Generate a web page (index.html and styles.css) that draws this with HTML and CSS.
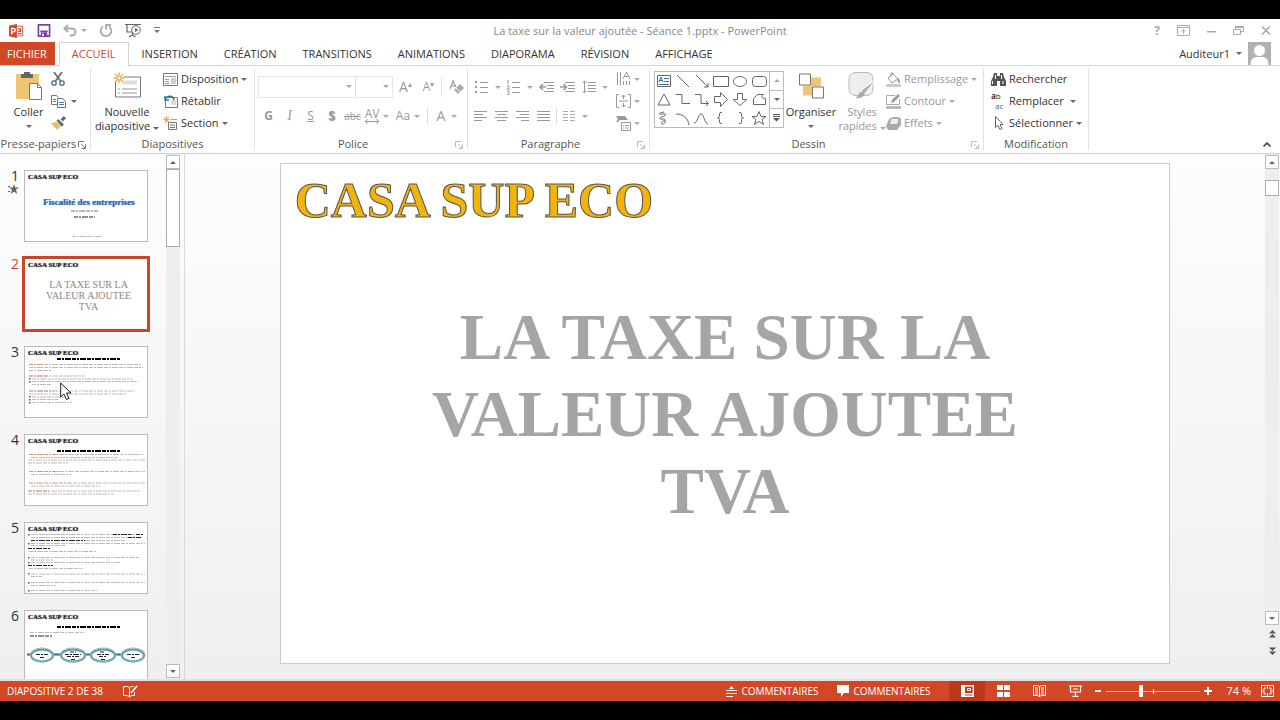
FILE: index.html
```html
<!DOCTYPE html>
<html lang="fr">
<head>
    <meta charset="UTF-8">
    <meta name="viewport" content="width=device-width, initial-scale=1.0">
    <title>La taxe sur la valeur ajoutée - Séance 1.pptx - PowerPoint</title>
    <link rel="stylesheet" href="styles.css">
</head>
<body>

    <header class="titlebar">
        <div class="quick">
            <button aria-label="PowerPoint"><svg width="17" height="14" viewBox="0 0 17 16"><path fill="#d24726" d="M0 2l9-2v16l-9-2z"/><path fill="#fff" stroke="#d24726" d="M9 2.500h6.500v11H9"/><path fill="none" stroke="#d24726" stroke-width="1.500" d="M10 5.500h3v3h-3M10 11h4"/><path fill="none" stroke="#fff" stroke-width="1.600" d="M3 12V5h2a2 2 0 0 1 0 4H3"/></svg></button>
            <button aria-label="Enregistrer"><svg width="14" height="13" viewBox="0 0 14 14"><path fill="#fff" stroke="#7a3fa0" stroke-width="1.800" d="M1 1h12v12H1z"/><path fill="#7a3fa0" d="M3 7h8v1.500H3zM3.500 9h7v4h-7z"/><path fill="#fff" d="M5 10.500h2V13H5z"/></svg></button>
            <button class="off with-caret" aria-label="Annuler"><svg width="14" height="13" viewBox="0 0 14 13"><path fill="none" stroke="#aaa" stroke-width="2" d="M5 1L1.500 4.500 5 8M2 4.500h7a3.500 3.500 0 0 1 0 7H7"/></svg><i class="caret"></i></button>
            <button class="off" aria-label="Répéter"><svg width="14" height="14" viewBox="0 0 14 14"><path fill="none" stroke="#aaa" stroke-width="1.800" d="M4 2.500a5.300 5.300 0 1 0 6 0M7 5.500V1h5"/></svg></button>
            <button aria-label="Diaporama"><svg width="17" height="15" viewBox="0 0 17 15"><path fill="none" stroke="#666" stroke-width="1.200" d="M0 1.500h16M2 1.500V9h5M7.500 10v2M4 14l3.500-2 3 2"/><circle cx="11" cy="7" r="4.300" fill="#fff" stroke="#666"/><path fill="#3b8f63" d="M10 4.800l3.500 2.200-3.500 2.200z"/></svg></button>
            <button aria-label="Personnaliser"><svg width="6" height="7" viewBox="0 0 6 7"><path fill="#777" d="M0 0h6v1H0zM0 3h6L3 6z"/></svg></button>
        </div>
        <h1>La taxe sur la valeur ajoutée - Séance 1.pptx - PowerPoint</h1>
        <div class="window-btns">
            <button class="help" aria-label="Aide">?</button>
            <button aria-label="Options du ruban"><svg width="13" height="11" viewBox="0 0 13 11"><path fill="none" stroke="#aaa" d="M.5.5h12v10H.5zM.5 2.500h12M6.500 9V5M4.500 6.500l2-2 2 2"/></svg></button>
            <button aria-label="Réduire"><svg width="9" height="11" viewBox="0 0 9 11"><path fill="#aaa" d="M0 6h9v1.500H0z"/></svg></button>
            <button aria-label="Restaurer"><svg width="11" height="9" viewBox="0 0 11 9"><path fill="none" stroke="#aaa" d="M.5 3.500h7v5h-7zM2.500 3.500v-3h8v5h-3M2.500 1.500h8"/></svg></button>
            <button aria-label="Fermer"><svg width="10" height="9" viewBox="0 0 10 9"><path stroke="#aaa" stroke-width="1.600" d="M1 .5l8 8M9 .5l-8 8"/></svg></button>
        </div>
    </header>

    <nav class="tabs">
        <a class="file" href="#fichier">FICHIER</a>
        <a class="active" href="#accueil">ACCUEIL</a>
        <a href="#insertion">INSERTION</a>
        <a href="#creation">CRÉATION</a>
        <a href="#transitions">TRANSITIONS</a>
        <a href="#animations">ANIMATIONS</a>
        <a href="#diaporama">DIAPORAMA</a>
        <a href="#revision">RÉVISION</a>
        <a href="#affichage">AFFICHAGE</a>
        <button class="user">Auditeur1 <i class="caret"></i>
            <svg width="23" height="23" viewBox="0 0 23 23"><path fill="#b1b1b1" d="M0 0h23v23H0z"/><circle cx="11.500" cy="8.500" r="5.500" fill="#fff"/><path fill="#fff" d="M2.500 23c0-6 3-8 6-8h6c3 0 6 2 6 8z"/></svg>
        </button>
    </nav>

    <section class="ribbon">
        <div class="group g-clip">
            <div class="tools">
                <button class="big"><svg width="28" height="30" viewBox="0 0 28 30"><path fill="#edc573" d="M1 3h23v25H1z"/><path fill="#666" d="M6 3h3V1h6v2h3v4H6z"/><path fill="#fff" stroke="#777" d="M14.500 12.500h8l4 4v12h-12z"/><path fill="none" stroke="#777" d="M22.500 12.500v4h4"/></svg>
                    <span>Coller</span><i class="caret"></i></button>
                <div class="rows">
                    <button aria-label="Couper"><svg width="14" height="14" viewBox="0 0 14 14"><path fill="none" stroke="#666" stroke-width="1.600" d="M3 0l6.500 9M11 0L4.500 9"/><circle cx="3" cy="11" r="2.200" fill="none" stroke="#3f6f99" stroke-width="1.300"/><circle cx="11" cy="11" r="2.200" fill="none" stroke="#3f6f99" stroke-width="1.300"/></svg></button>
                    <button aria-label="Copier"><svg width="15" height="13" viewBox="0 0 15 13"><path fill="#fff" stroke="#777" d="M.5.5h5l2 2v7h-7z"/><path fill="#fff" stroke="#4a7ba5" d="M6.500 3.500h5l3 3v6h-8z"/><path stroke="#4a7ba5" d="M8 7.500h5M8 9.500h5M2 4.500h3M2 6.500h3"/></svg><i class="caret"></i></button>
                    <button aria-label="Reproduire la mise en forme"><svg width="15" height="14" viewBox="0 0 14 13"><path fill="#e6bd6c" d="M0 7l5-2 4 4-3 4z"/><path fill="#666" d="M5 4l2-1 5 5-2 2zM9 3l3-3 2 2-3 3z"/></svg></button>
                </div>
            </div>
            <div class="name">Presse-papiers<svg class="launch" viewBox="0 0 8 8"><path d="M.5 6V.5H6M3 3l4 4M7.500 3.500v4h-4"/></svg></div>
        </div>

        <div class="group g-slides">
            <div class="tools">
                <button class="big"><svg width="28" height="27" viewBox="0 0 28 27"><path fill="#fff" stroke="#777" d="M2.500 4.500h25v20h-25z"/><path fill="#ddd" d="M10 8h14v4H10z"/><path stroke="#999" d="M5 16.500h2M9 16.500h15M5 20.500h2M9 20.500h15"/><circle cx="6" cy="5.500" r="5" fill="#fff"/><path stroke="#e2b04a" stroke-width="1.400" d="M6 0v11M.5 5.500h11M2 1.500l8 8M10 1.500l-8 8"/><circle cx="6" cy="5.500" r="2" fill="#fff" stroke="#e2b04a"/></svg>
                    <span>Nouvelle<br>diapositive <i class="caret"></i></span></button>
                <div class="rows">
                    <button><svg width="15" height="13" viewBox="0 0 15 13"><path fill="#fff" stroke="#777" d="M.5.5h14v12H.5z"/><path stroke="#999" d="M2 3.500h11M2 6.500h4M2 8.500h4M2 10.500h4"/><path fill="#ccc" d="M8 5h5v6H8z"/></svg>Disposition <i class="caret"></i></button>
                    <button><svg width="15" height="13" viewBox="0 0 15 13"><path fill="#fff" stroke="#777" d="M2.500 2.500h12v10h-12z"/><path fill="#ddd" d="M8 5h5v5H8z"/><path fill="none" stroke="#35709e" stroke-width="1.600" d="M2 1v4h4M2 5c2-5 8-5 9 0"/></svg>Rétablir</button>
                    <button><svg width="15" height="14" viewBox="0 0 15 14"><path fill="none" stroke="#e2b04a" d="M3.500 0v7M0 3.500h7M1 1l5 5M6 1L1 6"/><path stroke="#d99a4a" stroke-width="1.200" d="M8 3.500h6"/><path fill="#fff" stroke="#777" d="M5.500 6.500h8v7h-8zM7 9h5M7 11.500h5"/></svg>Section <i class="caret"></i></button>
                </div>
            </div>
            <div class="name">Diapositives</div>
        </div>

        <div class="group g-font off">
            <div class="tools lines">
                <div class="line tall">
                    <label class="combo wide"><select disabled aria-label="Police"><option></option></select><i class="caret"></i></label>
                    <label class="combo"><select disabled aria-label="Taille"><option></option></select><i class="caret"></i></label>
                    <button class="glyph" disabled aria-label="Agrandir">A<sup>▴</sup></button>
                    <button class="glyph small" disabled aria-label="Réduire">A<sup>▾</sup></button>
                    <span class="sep"></span>
                    <button class="glyph" disabled aria-label="Effacer"><svg width="15" height="15" viewBox="0 0 15 15"><path fill="none" stroke="#999" stroke-width="1.200" d="M1 9l3-8 3 6M2 6h4"/><path fill="#aaa" d="M5 10l6-6 4 4-6 6z"/><path stroke="#fff" d="M7 8l4 4"/></svg></button>
                </div>
                <div class="line">
                    <button class="glyph" disabled><b>G</b></button>
                    <button class="glyph serif" disabled><em>I</em></button>
                    <button class="glyph" disabled><u>S</u></button>
                    <button class="glyph shade" disabled><b>S</b></button>
                    <button class="glyph tiny" disabled><s>abc</s></button>
                    <button class="glyph av" disabled><span>AV<svg width="14" height="5" viewBox="0 0 14 5"><path fill="none" stroke="#999" d="M0 2.500h14M2.500 0L.5 2.500l2 2.500M11.500 0l2 2.500-2 2.500"/></svg></span><i class="caret"></i></button>
                    <button class="glyph more" disabled>Aa <i class="caret"></i></button>
                    <span class="sep"></span>
                    <button class="glyph color" disabled>A <i class="caret"></i></button>
                </div>
            </div>
            <div class="name">Police<svg class="launch" viewBox="0 0 8 8"><path d="M.5 6V.5H6M3 3l4 4M7.500 3.500v4h-4"/></svg></div>
        </div>

        <div class="group g-para off">
            <div class="tools">
                <div class="lines">
                    <div class="line tall">
                        <button class="cell pair" disabled aria-label="Puces"><svg width="14" height="14" viewBox="0 0 14 14"><path stroke="#999" d="M5 2.500h8M5 7.500h8M5 12.500h8"/><path fill="#999" d="M0 1h2v2H0zM0 6h2v2H0zM0 11h2v2H0z"/></svg><i class="caret"></i></button>
                        <button class="cell pair" disabled aria-label="Numérotation"><svg width="14" height="15" viewBox="0 0 14 15"><path stroke="#999" d="M5 2.500h8M5 7.500h8M5 12.500h8"/><path fill="none" stroke="#999" d="M1 0v4M0 6h2v1.500L0 9h3M0 11h2v3.500H0"/></svg><i class="caret"></i></button>
                        <button class="cell" disabled aria-label="Diminuer le retrait"><svg width="16" height="12" viewBox="0 0 16 12"><path fill="none" stroke="#999" d="M5 1.500h10M8 4.500h7M8 7.500h7M5 10.500h10"/><path fill="none" stroke="#999" stroke-width="1.600" d="M7 6H1M4 3L1 6l3 3"/></svg></button>
                        <button class="cell" disabled aria-label="Augmenter le retrait"><svg width="16" height="12" viewBox="0 0 16 12"><path fill="none" stroke="#999" d="M5 1.500h10M8 4.500h7M8 7.500h7M5 10.500h10"/><path fill="none" stroke="#999" stroke-width="1.600" d="M0 6h6M3.500 3l3 3-3 3"/></svg></button>
                        <button class="cell pair" disabled aria-label="Interligne"><svg width="14" height="14" viewBox="0 0 14 14"><path fill="none" stroke="#999" d="M6 2.500h8M6 5.500h8M6 8.500h8M6 11.500h8M2.500 1v12M.5 3l2-2 2 2M.5 11l2 2 2-2"/></svg><i class="caret"></i></button>
                    </div>
                    <div class="line">
                        <button class="cell" disabled aria-label="Gauche"><svg width="14" height="12" viewBox="0 0 14 12"><path stroke="#999" d="M0 1.500h13M0 4.500h9M0 7.500h13M0 10.500h8"/></svg></button>
                        <button class="cell" disabled aria-label="Centrer"><svg width="14" height="12" viewBox="0 0 14 12"><path stroke="#999" d="M0 1.500h13M2 4.500h9M0 7.500h13M2 10.500h9"/></svg></button>
                        <button class="cell" disabled aria-label="Droite"><svg width="14" height="12" viewBox="0 0 14 12"><path stroke="#999" d="M0 1.500h13M4 4.500h9M0 7.500h13M5 10.500h8"/></svg></button>
                        <button class="cell" disabled aria-label="Justifier"><svg width="14" height="12" viewBox="0 0 14 12"><path stroke="#999" d="M0 1.500h13M0 4.500h13M0 7.500h13M0 10.500h13"/></svg></button>
                        <span class="sep"></span>
                        <button class="cell pair" disabled aria-label="Colonnes"><svg width="13" height="12" viewBox="0 0 13 12"><path stroke="#aaa" d="M0 1.500h5M0 4.500h5M0 7.500h5M0 10.500h5M7 1.500h5M7 4.500h5M7 7.500h5M7 10.500h5"/></svg><i class="caret"></i></button>
                    </div>
                </div>
                <div class="rows">
                    <button disabled aria-label="Orientation"><svg width="15" height="16" viewBox="0 0 15 16"><path fill="none" stroke="#999" d="M1.500 1v13M4.500 1v13M7.500 10v4M10.500 10v4M13.500 10v4M7 8l3.500-7L14 8M8.500 5.500h4"/></svg><i class="caret"></i></button>
                    <button disabled aria-label="Aligner le texte"><svg width="15" height="14" viewBox="0 0 15 14"><path fill="none" stroke="#999" d="M3 .5H.5v13H3M12 .5h2.500v13H12M3 7h9M7.500 1v4M5.500 3l2-2 2 2M7.500 9v4M5.500 11l2 2 2-2"/></svg><i class="caret"></i></button>
                    <button disabled aria-label="SmartArt"><svg width="15" height="15" viewBox="0 0 15 15"><path fill="#999" d="M0 0h9l3 4H4L2 6H0l2-3z"/><path fill="#fff" stroke="#999" d="M5.500 6.500h9v8h-9zM7 9.500h1M9 9.500h4M7 12h1M9 12h4"/></svg><i class="caret"></i></button>
                </div>
            </div>
            <div class="name">Paragraphe<svg class="launch" viewBox="0 0 8 8"><path d="M.5 6V.5H6M3 3l4 4M7.500 3.500v4h-4"/></svg></div>
        </div>

        <div class="group g-draw">
            <div class="tools">
                <div class="gallery">
                    <div class="shapes">
                        <svg viewBox="0 0 18 18"><path d="M2.500 3.500h13v11h-13z"/><path d="M4 10l2-5 2 5M5 8.500h2M9 6.500h5M9 9.500h5M4 12.500h10" stroke="#3f6f99"/></svg>
                        <svg viewBox="0 0 18 18"><path d="M3 3l12 12"/></svg>
                        <svg viewBox="0 0 18 18"><path d="M3 3l12 12M15 11v4h-4"/></svg>
                        <svg viewBox="0 0 18 18"><path d="M1.500 4.500h15v10h-15z"/></svg>
                        <svg viewBox="0 0 18 18"><ellipse cx="9" cy="9.500" rx="6.500" ry="5"/></svg>
                        <svg viewBox="0 0 18 18"><rect x="2.500" y="4.500" width="14" height="10" rx="3"/></svg>
                        <svg viewBox="0 0 18 18"><path d="M9 4l6 11H3z"/></svg>
                        <svg viewBox="0 0 18 18"><path d="M2 4.500h6v9h8"/></svg>
                        <svg viewBox="0 0 18 18"><path d="M2 4.500h6v9h7M13 11l2.500 2.500L13 16"/></svg>
                        <svg viewBox="0 0 18 18"><path d="M2.500 6.500h6v-4l7 7-7 7v-4h-6z"/></svg>
                        <svg viewBox="0 0 18 18"><path d="M6.500 3.500h5v6h4l-6.500 6-6.500-6h4z"/></svg>
                        <svg viewBox="0 0 18 18"><path d="M3.500 14.500v-6l4-4h6c-4 3 0 4 2 4v6z"/></svg>
                        <svg viewBox="0 0 18 18"><path d="M9 3C2 4 4 6 8 5s3 2-1 3-2 3 1 2 3 5 0 5-1-4 2-3"/></svg>
                        <svg viewBox="0 0 18 18"><path d="M2 5c7 0 12 4 13 11"/></svg>
                        <svg viewBox="0 0 18 18"><path d="M1 14C5 14 5 5 8 5s3 9 7 10"/></svg>
                        <svg viewBox="0 0 18 18"><path d="M10 3.500H9q-1.500 0-1.500 1.500v2.500q0 1.500-2 1.500 2 0 2 1.500V13q0 1.500 1.500 1.500h1"/></svg>
                        <svg viewBox="0 0 18 18"><path d="M8 3.500h1q1.500 0 1.500 1.500v2.500q0 1.500 2 1.500-2 0-2 1.500V13q0 1.500-1.500 1.500H8"/></svg>
                        <svg viewBox="0 0 18 18"><path d="M9 2.500l2 5h5l-4 3 1.500 5L9 12.500l-4.500 3 1.500-5-4-3h5z"/></svg>
                    </div>
                    <div class="gallery-nav">
                        <button class="off" aria-label="Haut"><i class="caret up"></i></button>
                        <button aria-label="Bas"><i class="caret"></i></button>
                        <button aria-label="Plus"><svg width="7" height="8" viewBox="0 0 7 8"><path fill="#555" d="M0 0h7v1H0zM0 2h7v1H0zM0 4h7L3.500 7.500z"/></svg></button>
                    </div>
                </div>
                <button class="big"><svg width="27" height="27" viewBox="0 0 27 27"><path fill="#edc573" d="M13 5h10v9H13zM5 13h9v10H5z"/><path fill="#fff" stroke="#777" d="M1.500 1.500h11v11h-11zM14.500 14.500h11v11h-11z"/></svg>
                    <span>Organiser</span><i class="caret"></i></button>
                <button class="big off" disabled><svg width="28" height="29" viewBox="0 0 28 29"><rect x="1" y="1" width="24" height="23" rx="6" fill="#eee" stroke="#bbb"/><path fill="#aaa" stroke="#fff" d="M28 8L17 22l-4-3z"/><path fill="#aaa" d="M15 20c4 2 1 7-8 7 4-2 3-7 8-7z"/></svg>
                    <span>Styles<br>rapides <i class="caret"></i></span></button>
                <div class="rows off">
                    <button disabled><svg width="15" height="15" viewBox="0 0 15 15"><path fill="none" stroke="#999" d="M2 6l5-4 5 5-6 4zM5 5V1h2v2"/><path fill="#999" d="M12 6c3 3 2 5 1 5s-2-2-1-5z"/><path fill="#ccc" d="M0 12h15v3H0z"/></svg>Remplissage <i class="caret"></i></button>
                    <button disabled><svg width="15" height="15" viewBox="0 0 15 15"><path fill="none" stroke="#aaa" d="M13.500 5v5.500H.5v-9H9"/><path fill="#999" d="M5 9l1-3 6-6 2 2-6 6z"/><path fill="#bbb" d="M0 12h15v3H0z"/></svg>Contour <i class="caret"></i></button>
                    <button disabled><svg width="15" height="13" viewBox="0 0 15 13"><path fill="#aaa" d="M0 9l3-7 4-2h6l2 2v6l-4 5H2z"/><path fill="#eee" stroke="#aaa" d="M5 1.500h8l-1.500 6h-8z"/></svg>Effets <i class="caret"></i></button>
                </div>
            </div>
            <div class="name">Dessin<svg class="launch off" viewBox="0 0 8 8"><path d="M.5 6V.5H6M3 3l4 4M7.500 3.500v4h-4"/></svg></div>
        </div>

        <div class="group g-edit">
            <div class="tools">
                <div class="rows">
                    <button><svg width="15" height="13" viewBox="0 0 15 13"><path fill="#555" d="M3 0h3v3h3V0h3l1 4 2 4v5H9V8H6v5H0V8l2-4z"/><path stroke="#fff" d="M1.500 8v3M12 8v3M4.500 2v4M10.500 2v4"/></svg>Rechercher</button>
                    <button><span class="replace"><span><b>a</b>b</span><em>ac</em></span>Remplacer <i class="caret far"></i></button>
                    <button><svg width="15" height="14" viewBox="0 0 15 14"><path fill="#fff" stroke="#666" d="M4.500.5v11l2.500-2 2 4 2-1-2-4h3z"/></svg>Sélectionner<i class="caret"></i></button>
                </div>
            </div>
            <div class="name">Modification</div>
        </div>
        <button class="collapse" aria-label="Réduire le ruban"><svg width="8" height="5" viewBox="0 0 8 5"><path fill="none" stroke="#555" stroke-width="1.800" d="M.5 4.500L4 1l3.500 3.500"/></svg></button>
    </section>

    <main class="work">
        <aside class="panel">
            <ol class="thumbs">
                <li>
                    <span class="num">1<svg width="11" height="10" viewBox="0 0 11 10"><path fill="#666" d="M6 0l1.200 3.500H11L8 5.800 9.200 10 6 7.500 2.800 10 4 5.800 1 3.500h3.800zM0 2h2v1H0zM0 7h2v1H0z"/></svg></span>
                    <div class="thumb"><strong>CASA SUP ECO</strong>
                        <p class="blue">Fiscalité des entreprises</p>
                        <svg viewBox="0 0 122 70"><path class="t dark" d="M46 40h27"/><path class="t black" d="M49 46h21"/><path class="t" d="M47 65.500h30"/></svg>
                    </div>
                </li>
                <li class="current">
                    <span class="num">2</span>
                    <div class="thumb"><strong>CASA SUP ECO</strong>
                        <p class="grey">LA TAXE SUR LA<br>VALEUR AJOUTEE<br>TVA</p>
                    </div>
                </li>
                <li>
                    <span class="num">3</span>
                    <div class="thumb"><strong>CASA SUP ECO</strong>
                        <svg viewBox="0 0 122 70"><path class="t head" d="M32 12h63"/><path class="t" d="M4 17.500h112M4 20.500h114M4 23.500h23M4 29h56M7 32h101M7 34.500h106M7 37.500h20M4 44h106M4 47h98M7 50h38M7 52.500h26M7 55.500h40"/><path class="t red" d="M4 17.500h14M4 29h18M4 44h24"/><path class="dot" d="M4 31h1.500v1.500H4zM4 34h1.500v1.500H4zM4 49h1.500v1.500H4zM4 52h1.500v1.500H4zM4 55h1.500v1.500H4z"/></svg>
                    </div>
                </li>
                <li>
                    <span class="num">4</span>
                    <div class="thumb"><strong>CASA SUP ECO</strong>
                        <svg viewBox="0 0 122 70"><path class="t head" d="M32 16h63"/><path class="t" d="M35 19.500h84M6 22.500h87M3 25h117M3 28h40M35 36.500h85M6 39.500h40M48 48h72M6 51h69M3 56h112M3 59h86"/><path class="t red" d="M4 19.500h31M4 36.500h31M4 48h43M3 56h21"/></svg>
                    </div>
                </li>
                <li>
                    <span class="num">5</span>
                    <div class="thumb"><strong>CASA SUP ECO</strong>
                        <svg viewBox="0 0 122 70"><path class="t" d="M6 11.500h112M6 14.500h110M6 17.500h95M6 20.500h114M6 22.500h34M4 28.500h68M6 34.500h108M6 37h22M6 39.500h89M4 45.500h54M6 51h114M6 53.500h11M6 59.500h114M6 62.500h25M6 67.500h66"/><path class="t black" d="M88 11.500h18M111 11.500h7M6 17.500h54M103 14.500h13M3 25.500h23M3 42.500h25"/><path class="dot" d="M3 11h1.500v1.500H3zM3 20h1.500v1.500H3zM3 34h1.500v1.500H3zM3 39h1.500v1.500H3zM3 50h1.500v1.500H3zM3 59h1.500v1.500H3zM3 67h1.500v1.500H3z"/></svg>
                    </div>
                </li>
                <li>
                    <span class="num">6</span>
                    <div class="thumb"><strong>CASA SUP ECO</strong>
                        <svg viewBox="0 0 122 70"><path class="t head" d="M32 16h63"/><path class="t" d="M5 21.500h54"/><path class="t black" d="M5 25h22"/><path stroke="#36658c" stroke-width="2" d="M2 43.500h118"/><g fill="#fff" stroke="#5b9bb8" stroke-width="2"><ellipse cx="17" cy="44.500" rx="11" ry="6"/><ellipse cx="48" cy="44.500" rx="12" ry="6"/><ellipse cx="78" cy="44.500" rx="12" ry="6"/><ellipse cx="108" cy="44.500" rx="11" ry="6"/></g><g fill="none" stroke="#9cba8c"><ellipse cx="17" cy="44" rx="12" ry="7"/><ellipse cx="48" cy="44" rx="13" ry="7"/><ellipse cx="78" cy="44" rx="13" ry="7"/><ellipse cx="108" cy="44" rx="12" ry="7"/></g><path class="t black" d="M11 43.500h12M15 46.500h4M45 41h6M40 43.500h16M42 45.500h12M46 48.500h4M75 41h5M72 43.500h12M74 45.500h8M76 48.500h4M102 43.500h12M106 46.500h4"/></svg>
                    </div>
                </li>
            </ol>
            <div class="scroll">
                <button aria-label="Défiler vers le haut"><i class="caret up"></i></button>
                <div class="knob long"></div>
                <button class="end" aria-label="Défiler vers le bas"><i class="caret"></i></button>
            </div>
            <svg class="pointer" width="13" height="19" viewBox="0 0 13 19"><path fill="#fff" stroke="#222" d="M.7 1v14l3.300-3 2.500 5.500 2.500-1L6.500 11H11z"/></svg>
        </aside>

        <section class="editor">
            <article class="slide">
                <h2>CASA SUP ECO</h2>
                <p>LA TAXE SUR LA<br>VALEUR AJOUTEE<br>TVA</p>
            </article>
        </section>
        <div class="scroll right">
            <button aria-label="Défiler vers le haut"><i class="caret up"></i></button>
            <div class="knob"></div>
            <button class="end" aria-label="Défiler vers le bas"><i class="caret"></i></button>
            <button class="page" aria-label="Diapositive précédente"><svg width="7" height="8" viewBox="0 0 7 8"><path fill="#555" d="M3.500 0L7 3.500H0zM3.500 4L7 7.500H0z"/></svg></button>
            <button class="page" aria-label="Diapositive suivante"><svg width="7" height="8" viewBox="0 0 7 8"><path fill="#555" d="M0 .5h7L3.500 4zM0 4.500h7L3.500 8z"/></svg></button>
        </div>
    </main>

    <footer class="status">
        <span>DIAPOSITIVE 2 DE 38</span>
        <button class="spell" aria-label="Orthographe"><svg width="15" height="13" viewBox="0 0 15 13"><path fill="none" stroke="#fff" d="M6.500 12V2.500c-1-1-3-1-6-1v9c3 0 5 0 6 1.500 1-1.500 3-1.500 5-1.500V7M6.500 2.500c1-1 2-1 4-1"/><path stroke="#fff" stroke-width="1.600" d="M8 8l6-7"/></svg></button>
        <div class="status-right">
            <button class="note"><svg width="11" height="11" viewBox="0 0 11 11"><path fill="#fff" d="M5.500 0L8 3H3zM0 4h11v1H0zM0 7h11v1H0zM0 10h7v1H0z"/></svg>COMMENTAIRES</button>
            <button class="note"><svg width="12" height="12" viewBox="0 0 12 12"><path fill="#fff" d="M0 0h12v8H7l-3 4V8H0z"/></svg>COMMENTAIRES</button>
            <div class="views">
                <button class="on" aria-label="Normal"><svg width="13" height="12" viewBox="0 0 13 12"><path fill="none" stroke="#fff" stroke-width="1.400" d="M.7.7h11.600v10.600H.7zM4 8.700h8"/><path fill="#fff" d="M0 0h4v12H0z"/><path fill="none" stroke="#fff" d="M6.500 3.500h3v2h-3z"/></svg></button>
                <button aria-label="Trieuse"><svg width="13" height="12" viewBox="0 0 13 12"><path fill="#fff" d="M0 0h6v5H0zM7 0h6v5H7zM0 7h6v5H0zM7 7h6v5H7z"/></svg></button>
                <button aria-label="Lecture"><svg width="13" height="12" viewBox="0 0 13 12"><path fill="none" stroke="#fff" d="M6.500 1.500v10M.5.500h4l2 1 2-1h4v10h-4l-2 1-2-1h-4zM2 3h3M2 5h3M2 7h3M2 9h3M8 3h3M8 5h3M8 7h3M8 9h3"/></svg></button>
                <button aria-label="Diaporama"><svg width="13" height="12" viewBox="0 0 13 12"><path fill="none" stroke="#fff" stroke-width="1.200" d="M0 1h13M1.500 1v6h10V1M4 4h5M6.500 7v4M3.500 11.300h6"/></svg></button>
            </div>
            <div class="zoom">
                <button aria-label="Zoom arrière"><svg width="7" height="8" viewBox="0 0 7 8"><path fill="#fff" d="M0 3h6v2H0z"/></svg></button>
                <input type="range" min="0" max="100" value="36" aria-label="Zoom">
                <button aria-label="Zoom avant"><svg width="8" height="8" viewBox="0 0 8 8"><path fill="#fff" d="M3 0h2v3h3v2H5v3H3V5H0V3h3z"/></svg></button>
            </div>
            <button class="percent">74 %</button>
            <button class="fit" aria-label="Ajuster"><svg width="13" height="12" viewBox="0 0 13 12"><path fill="none" stroke="#fff" d="M.5.500h12v11H.5zM3 5V3h2M8 3h2v2M10 7v2H8M5 9H3V7M6.500 1v3M6.500 8v3M1 6h3M9 6h3"/></svg></button>
        </div>
    </footer>

</body>
</html>
```

FILE: styles.css
```css
*{
    margin: 0;
    padding: 0;
    box-sizing: border-box;
}

body{
    height: 100vh;
    display: flex;
    flex-direction: column;
    padding: 19px 0;
    overflow: hidden;
    background-color: #000;
    color: #333;
    font-family: "Open Sans", "Noto Sans", sans-serif;
    font-size: 11px;
    line-height: 14px;
}

button{
    display: flex;
    align-items: center;
    border: 0;
    background: none;
    color: inherit;
    font: inherit;
    white-space: nowrap;
}

svg{
    display: block;
    flex: none;
}

a{
    text-decoration: none;
    color: inherit;
}

.caret{
    display: inline-block;
    flex: none;
    border: 3px solid transparent;
    border-top-color: #666;
    border-bottom: 0;
}
.caret.up{
    border-top: 0;
    border-bottom: 3px solid #666;
}
.off .caret{border-top-color: #aaa;}
.off .caret.up{border-bottom-color: #aaa;}

/* title bar */
.titlebar{
    display: grid;
    grid-template-columns: 1fr auto 1fr;
    align-items: center;
    height: 23px;
    flex: none;
    background-color: #fff;
}
.quick{
    display: flex;
    align-items: center;
    gap: 12px;
    padding-left: 8px;
}
.with-caret{gap: 4px;}
h1{
    font-size: 11px;
    font-weight: 400;
    color: #888;
}
.window-btns{
    display: flex;
    justify-content: flex-end;
    align-items: center;
    gap: 17px;
    padding-right: 9px;
}
.help{
    font-size: 12px;
    font-weight: 700;
    color: #aaa;
}

/* tabs */
.tabs{
    display: flex;
    height: 24px;
    flex: none;
    background-color: #fff;
    border-bottom: 1px solid #d4d4d4;
}
.tabs a{
    padding: 5px 13px;
}
.tabs .file{
    padding: 5px 8px 5px 7px;
    margin-right: 4px;
    background-color: #d24726;
    color: #fff;
}
.tabs .active{
    margin-bottom: -1px;
    padding: 4px 12px;
    border: 1px solid #d4d4d4;
    border-bottom: 0;
    background-color: #fff;
    color: #d24726;
}
.user{
    margin-left: auto;
    padding-right: 9px;
    gap: 6px;
}

/* ribbon */
.ribbon{
    display: flex;
    height: 88px;
    flex: none;
    padding-top: 2px;
    background-color: #fff;
    border-bottom: 1px solid #d0d0d0;
}
.group{
    display: flex;
    flex-direction: column;
    margin-bottom: 3px;
    border-right: 1px solid #e1e1e1;
}
.tools{
    display: flex;
    height: 66px;
    flex: none;
}
.name{
    position: relative;
    flex: none;
    text-align: center;
    color: #555;
    line-height: 20px;
    margin-bottom: -4px;
}
.launch{
    position: absolute;
    right: 4px;
    top: 7px;
    width: 8px;
    height: 8px;
    fill: none;
    stroke: #777;
}
.off .launch, .launch.off{stroke: #bbb;}
.group .off, .off button{color: #999;}

.rows{
    display: flex;
    flex-direction: column;
}
.rows button{
    height: 22px;
    gap: 3px;
}
.big{
    flex-direction: column;
    justify-content: flex-start;
    padding-top: 3px;
}
.big svg{
    height: 30px;
    margin-bottom: 4px;
}
.big > .caret{margin-top: 6px;}

.g-clip{width: 91px;}
.g-clip .tools{padding-left: 6px;}
.g-clip .big{width: 45px;}
.g-clip .rows button{gap: 5px;}
.g-clip .name{padding-right: 13px;}
.g-slides{width: 164px;}
.g-slides .big{width: 72px;}
.g-font{width: 213px;}
.g-para{width: 182px;}
.g-font .name, .g-para .name{padding-right: 16px;}
.g-draw{width: 334px;}
.g-draw .name{padding-right: 16px;}
.g-edit{width: 105px;}
.g-edit .rows{padding-left: 7px;}

.lines{
    display: flex;
    flex-direction: column;
    padding-left: 3px;
}
.line{
    display: flex;
    align-items: center;
    height: 20px;
}
.tall{height: 38px;}
.sep{
    width: 1px;
    height: 20px;
    margin: 0 2px;
    background-color: #e1e1e1;
}
.combo{
    position: relative;
    width: 38px;
}
.combo.wide{
    width: 98px;
    margin-right: -1px;
}
.combo select{
    display: block;
    appearance: none;
    width: 100%;
    height: 22px;
    border: 1px solid #ddd;
    background-color: #fff;
}
.combo .caret{
    position: absolute;
    right: 4px;
    top: 9px;
}
.glyph{
    width: 21px;
    justify-content: center;
    font-size: 12px;
}
.tall .glyph{
    margin-left: 2px;
    font-size: 14px;
}
.tall .small{font-size: 12px;}
.glyph sup{
    font-size: 8px;
    line-height: 8px;
    align-self: flex-start;
}
.serif{
    font-family: "Liberation Serif", serif;
    font-size: 14px;
}
.shade{text-shadow: 1px 1px 1px #999;}
.tiny{font-size: 10px;}
.av{
    width: 28px;
    gap: 4px;
    line-height: 11px;
}
.more{
    width: 34px;
    gap: 4px;
}
.color{
    width: 34px;
    gap: 6px;
    font-size: 14px;
}

.cell{
    width: 21px;
    justify-content: center;
}
.g-para .lines{
    width: 143px;
    padding-left: 2px;
}
.pair{
    width: 32px;
    gap: 6px;
}
.tall .pair{width: 33px;}
.tall .pair:first-child{padding-left: 2px;}
.g-para .rows{padding-left: 5px;}

.gallery{
    display: flex;
    width: 130px;
    height: 57px;
    margin: 3px 0 0 4px;
    border: 1px solid #bbb;
}
.shapes{
    display: grid;
    grid-template-columns: repeat(6, 1fr);
    flex: 1;
}
.shapes svg{
    width: 18px;
    height: 18px;
    fill: none;
    stroke: #666;
}
.gallery-nav{
    display: flex;
    flex-direction: column;
    width: 14px;
    border-left: 1px solid #bbb;
}
.gallery-nav button{
    flex: 1;
    justify-content: center;
}
.gallery-nav button + button{border-top: 1px solid #bbb;}
.gallery + .big{width: 54px;}
.g-draw .big.off{width: 48px;}

.replace{
    display: flex;
    flex-direction: column;
    width: 15px;
    font-size: 8px;
    line-height: 10px;
    text-align: left;
}
.replace em{
    padding-left: 4px;
    font-style: normal;
    color: #35709e;
}
.far{margin-left: 3px;}
.collapse{
    margin-left: auto;
    align-self: flex-end;
    padding: 0 9px 6px 0;
}

/* work area */
.work{
    display: flex;
    flex: 1;
    min-height: 0;
    background: linear-gradient(#fdfdfd, #efefef);
    border-bottom: 2px solid #e2e2e2;
}
.panel{
    position: relative;
    display: flex;
    width: 185px;
    flex: none;
    border-right: 1px solid #d8d8d8;
}
.thumbs{
    width: 166px;
    padding-top: 14px;
    overflow: hidden;
    list-style: none;
}
.thumbs li{
    display: flex;
    height: 88px;
}
.num{
    width: 22px;
    padding-right: 3px;
    font-size: 14px;
    line-height: 16px;
    text-align: right;
}
.num svg{margin-left: 8px;}
.thumb{
    position: relative;
    width: 124px;
    height: 72px;
    margin: 2px;
    border: 1px solid #bbb;
    background-color: #fff;
    font-family: "Liberation Serif", serif;
    line-height: 11px;
}
.thumb strong{
    display: block;
    padding: 1px 3px;
    font-size: 7px;
    color: #222;
    text-shadow: 0 0 1px #333;
}
.thumb svg{
    position: absolute;
    inset: 0;
}
.thumb p{
    text-align: center;
    padding-top: 7px;
}
.thumb .blue{
    padding: 13px 0 0 6px;
    font-size: 9px;
    font-weight: 700;
    color: #3a68b4;
    text-shadow: 0 0 1px #3a68b4;
}
.thumb .grey{
    padding-left: 5px;
    font-size: 10px;
    color: #888;
}
.current .num{color: #c8472c;}
.current .thumb{
    width: 128px;
    height: 76px;
    margin: 0;
    border: 3px solid #c8472c;
}
.t{
    fill: none;
    stroke: #bbb;
    stroke-dasharray: 4 1 2 1 6 1;
}
.dark{stroke: #777;}
.black{stroke: #222;}
.head{
    stroke: #000;
    stroke-width: 2;
}
.red{stroke: #cf9a80;}
.dot{fill: #555;}
.pointer{
    position: absolute;
    left: 60px;
    top: 228px;
}

.scroll{
    display: flex;
    flex-direction: column;
    align-items: center;
    width: 14px;
    flex: none;
    padding: 1px 0;
    background-color: #eee;
}
.scroll button{
    width: 14px;
    height: 14px;
    justify-content: center;
    border: 1px solid #bbb;
    background-color: #fff;
}
.knob{
    width: 14px;
    height: 16px;
    margin-top: 11px;
    border: 1px solid #aaa;
    background-color: #fff;
}
.knob.long{
    height: 78px;
    margin-top: 0;
}
.scroll .end{margin-top: auto;}
.scroll.right{
    padding-bottom: 20px;
    margin-right: 1px;
}
.scroll .page{
    border: 0;
    height: 17px;
    background: none;
}

.editor{
    flex: 1;
    display: flex;
    justify-content: center;
    padding: 9px 0 15px;
}
.slide{
    height: 100%;
    aspect-ratio: 16 / 9;
    padding: 8px 14px;
    border: 1px solid #ccc;
    background-color: #fff;
    font-family: "Liberation Serif", serif;
    font-weight: 700;
}
.slide h2{
    font-size: 50px;
    line-height: 56px;
    color: #f2b30c;
    -webkit-text-stroke: 1px #555;
}
.slide p{
    padding-top: 71px;
    font-size: 65px;
    line-height: 77px;
    text-align: center;
    color: #a5a5a5;
}

/* status bar */
.status{
    display: flex;
    align-items: center;
    height: 20px;
    flex: none;
    padding-left: 7px;
    background-color: #d24726;
    color: #fff;
    font-size: 10px;
}
.spell{margin-left: 20px;}
.status-right{
    display: flex;
    align-items: center;
    height: 100%;
    margin-left: auto;
}
.note{
    gap: 4px;
    margin-right: 19px;
}
.views{
    display: flex;
    height: 100%;
}
.views button{
    width: 36px;
    justify-content: center;
}
.views .on{background-color: #b83b1d;}
.zoom{
    display: flex;
    align-items: center;
    gap: 4px;
    margin-left: 2px;
}
.zoom input{
    appearance: none;
    width: 94px;
    height: 12px;
    background: linear-gradient(#fff, #fff) center / 1px 5px no-repeat, linear-gradient(#f5c9bd, #f5c9bd) center / 100% 1px no-repeat;
}
.zoom input::-webkit-slider-thumb{
    appearance: none;
    width: 4px;
    height: 12px;
    background-color: #fff;
}
.percent{
    margin-left: 14px;
    font-size: 11px;
}
.fit{margin: 0 6px 0 10px;}
```
